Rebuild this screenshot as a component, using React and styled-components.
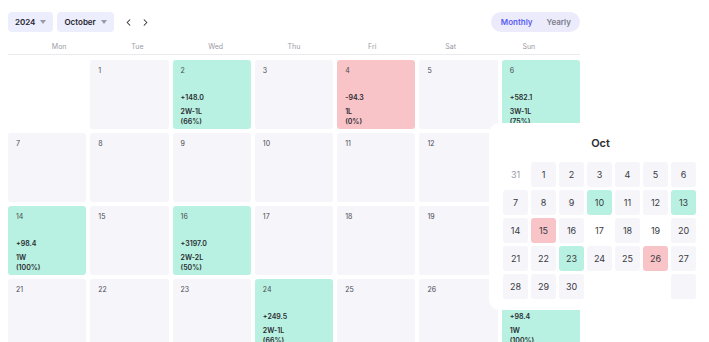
import React from "react";
import styled, { createGlobalStyle } from "styled-components";
import { ChevronLeft, ChevronRight } from "lucide-react";

const GlobalStyle = createGlobalStyle`
  body {
    margin: 0;
    background: #ffffff;
    font-family: "Inter", "Noto Sans", sans-serif;
    color: #2b2b33;
    overflow: hidden;
  }
`;

const Page = styled.div`
  position: relative;
  width: 709px;
  height: 342px;
  overflow: hidden;
`;

const Calendar = styled.div`
  width: 572px;
  padding: 12px 0 0 8px;
`;

const Toolbar = styled.div`
  display: flex;
  justify-content: space-between;
  align-items: center;
  height: 20px;
`;

const ToolGroup = styled.div`
  display: flex;
  align-items: center;
  gap: 4px;
`;

const Dropdown = styled.div`
  display: flex;
  align-items: center;
  gap: 5px;
  height: 20px;
  padding: 0 7px 0 7px;
  border-radius: 4px;
  background: #eceefd;
  font-size: 8px;
  font-weight: 600;
  color: #25252d;
`;

const Caret = styled.span`
  width: 0;
  height: 0;
  border-left: 3.5px solid transparent;
  border-right: 3.5px solid transparent;
  border-top: 4px solid #9a9aa6;
`;

const NavButton = styled.span`
  display: flex;
  align-items: center;
  margin-left: ${(p) => p.$ml || 0}px;
  color: #2b2b33;
`;

const Toggle = styled.div`
  display: flex;
  align-items: center;
  height: 20px;
  padding: 0 9px 0 10px;
  gap: 14px;
  border-radius: 10px;
  background: #ebebfc;
  font-size: 8px;
  font-weight: 600;
`;

const ToggleItem = styled.span`
  color: ${(p) => (p.$active ? "#5a5ef0" : "#7c7c88")};
`;

const WeekHeader = styled.div`
  display: grid;
  grid-template-columns: repeat(7, 1fr);
  margin-top: 8px;
  padding: 0 12px;
  height: 14px;
  border-bottom: 1.5px solid #e9e9ee;
`;

const WeekDay = styled.span`
  text-align: center;
  font-size: 7px;
  color: #9a9aa4;
  line-height: 14px;
`;

const Grid = styled.div`
  display: grid;
  grid-template-columns: repeat(7, 1fr);
  grid-auto-rows: 69px;
  gap: 4px;
  margin-top: 5px;
`;

const bg = { win: "#b8f1e1", loss: "#f8c4c8", none: "#f5f5fa", empty: "transparent" };

const Cell = styled.div`
  display: flex;
  flex-direction: column;
  padding: 6px 8px 2px;
  border-radius: 3px;
  background: ${(p) => bg[p.$kind]};
  font-size: 7px;
  color: #4a4a52;
`;

const DayNum = styled.span`
  line-height: 10px;
`;

const Stats = styled.div`
  margin-top: auto;
  display: flex;
  flex-direction: column;
  font-weight: 600;
  color: #2a2a30;
  line-height: 10px;
`;

const Pnl = styled.span`
  margin-bottom: 4px;
`;

const Popover = styled.div`
  position: absolute;
  left: 489px;
  top: 123px;
  width: 222px;
  height: 187px;
  background: #ffffff;
  border-radius: 10px;
  padding: 9px 13px 0 14px;
  box-sizing: border-box;
`;

const PopTitle = styled.div`
  text-align: center;
  font-size: 11px;
  font-weight: 600;
  color: #2a2a30;
  height: 22px;
  line-height: 22px;
`;

const MiniGrid = styled.div`
  display: grid;
  grid-template-columns: repeat(7, 25px);
  grid-auto-rows: 25px;
  gap: 3px;
  margin-top: 8px;
`;

const MiniCell = styled.div`
  display: flex;
  align-items: center;
  justify-content: center;
  border-radius: 3px;
  background: ${(p) => bg[p.$kind]};
  font-size: 9px;
  color: ${(p) => (p.$muted ? "#9a9aa4" : "#3a3a42")};
`;

const days = [
  { d: "", k: "empty" },
  { d: 1, k: "none" },
  { d: 2, k: "win", pnl: "+148.0", rec: "2W-1L", pct: "(66%)" },
  { d: 3, k: "none" },
  { d: 4, k: "loss", pnl: "-94.3", rec: "1L", pct: "(0%)" },
  { d: 5, k: "none" },
  { d: 6, k: "win", pnl: "+582.1", rec: "3W-1L", pct: "(75%)" },
  { d: 7, k: "none" },
  { d: 8, k: "none" },
  { d: 9, k: "none" },
  { d: 10, k: "none" },
  { d: 11, k: "none" },
  { d: 12, k: "none" },
  { d: 13, k: "none" },
  { d: 14, k: "win", pnl: "+98.4", rec: "1W", pct: "(100%)" },
  { d: 15, k: "none" },
  { d: 16, k: "win", pnl: "+3197.0", rec: "2W-2L", pct: "(50%)" },
  { d: 17, k: "none" },
  { d: 18, k: "none" },
  { d: 19, k: "none" },
  { d: 20, k: "none" },
  { d: 21, k: "none" },
  { d: 22, k: "none" },
  { d: 23, k: "none" },
  { d: 24, k: "win", pnl: "+249.5", rec: "2W-1L", pct: "(66%)" },
  { d: 25, k: "none" },
  { d: 26, k: "none" },
  { d: 27, k: "win", pnl: "+98.4", rec: "1W", pct: "(100%)" },
];

const mini = [
  { d: 31, k: "empty", muted: true },
  ...Array.from({ length: 30 }, (_, i) => {
    const d = i + 1;
    let k = "none";
    if ([10, 13, 23].includes(d)) k = "win";
    if ([15, 26].includes(d)) k = "loss";
    if ([17, 19].includes(d)) k = "empty";
    return { d, k };
  }),
  { d: "", k: "empty" },
  { d: "", k: "empty" },
  { d: "", k: "empty" },
  { d: "", k: "none" },
];

const weekDays = ["Mon", "Tue", "Wed", "Thu", "Fri", "Sat", "Sun"];

export default function App() {
  return (
    <Page>
      <GlobalStyle />
      <Calendar>
        <Toolbar>
          <ToolGroup>
            <Dropdown>
              2024 <Caret />
            </Dropdown>
            <Dropdown>
              October <Caret />
            </Dropdown>
            <NavButton $ml={5}>
              <ChevronLeft size={11} strokeWidth={2.2} />
            </NavButton>
            <NavButton $ml={2}>
              <ChevronRight size={11} strokeWidth={2.2} />
            </NavButton>
          </ToolGroup>
          <Toggle>
            <ToggleItem $active>Monthly</ToggleItem>
            <ToggleItem>Yearly</ToggleItem>
          </Toggle>
        </Toolbar>
        <WeekHeader>
          {weekDays.map((w) => (
            <WeekDay key={w}>{w}</WeekDay>
          ))}
        </WeekHeader>
        <Grid>
          {days.map((c, i) => (
            <Cell key={i} $kind={c.k}>
              <DayNum>{c.d}</DayNum>
              {c.pnl && (
                <Stats>
                  <Pnl>{c.pnl}</Pnl>
                  <span>{c.rec}</span>
                  <span>{c.pct}</span>
                </Stats>
              )}
            </Cell>
          ))}
        </Grid>
      </Calendar>
      <Popover>
        <PopTitle>Oct</PopTitle>
        <MiniGrid>
          {mini.map((c, i) => (
            <MiniCell key={i} $kind={c.k} $muted={c.muted}>
              {c.d}
            </MiniCell>
          ))}
        </MiniGrid>
      </Popover>
    </Page>
  );
}
